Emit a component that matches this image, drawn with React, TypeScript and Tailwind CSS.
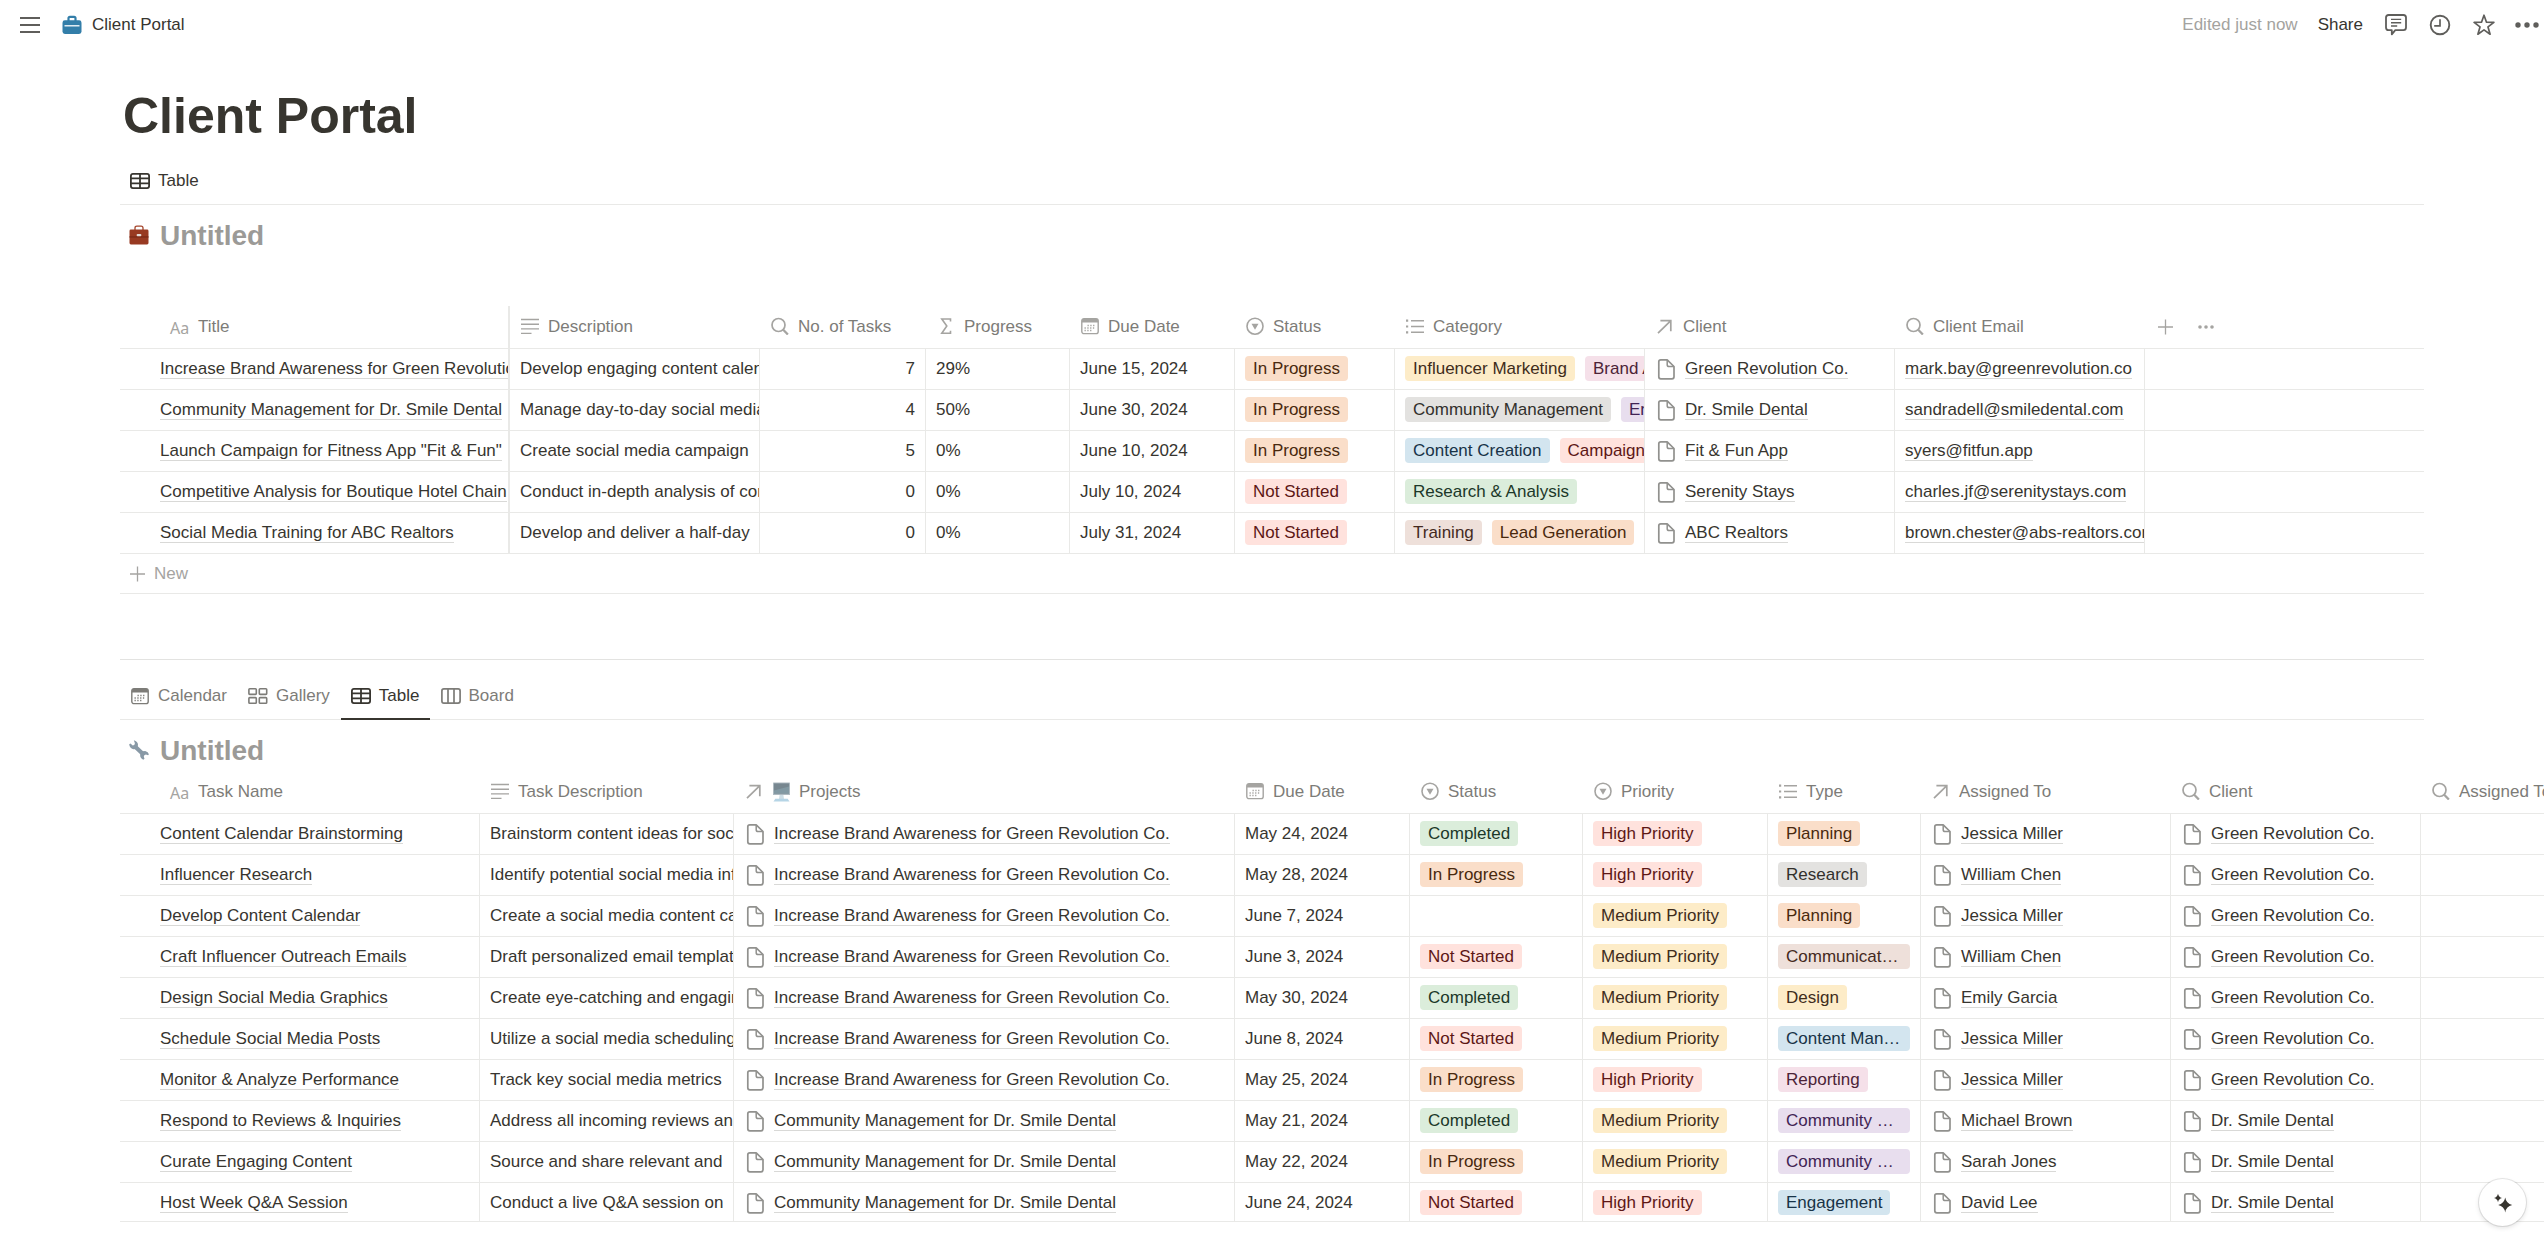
import type { ReactNode } from "react";
import clsx from "clsx";

type IconProps = { className?: string };

/* ---------- Icons ---------- */

function MenuIcon() {
  return (
    <svg width="20" height="20" viewBox="0 0 20 20" fill="none" stroke="#5f5e5b" strokeWidth="2">
      <path d="M0 3h20M0 10h20M0 17h20" />
    </svg>
  );
}

function ToolboxIcon() {
  return (
    <svg width="20" height="20" viewBox="0 0 20 20">
      <path d="M6.500 6V3.300Q6.500 1.900 7.900 1.900h4.200q1.400 0 1.400 1.400V6" fill="none" stroke="#337ea9" strokeWidth="2.200" />
      <rect x="0.500" y="5.300" width="19" height="13.700" rx="2.400" fill="#337ea9" />
      <path d="M2.500 10.800h15" stroke="#fff" strokeWidth="1.300" />
    </svg>
  );
}

function CommentIcon() {
  return (
    <svg width="22" height="22" viewBox="0 0 22 22" fill="none" stroke="#5f5e5b" strokeWidth="1.800" strokeLinejoin="round">
      <path d="M3.600 1h14.800Q21 1 21 3.600v10Q21 16.200 18.400 16.200H10.300L6.800 20.300V16.200H3.600Q1 16.200 1 13.600v-10Q1 1 3.600 1Z" />
      <path d="M6 5.400h10.200M6 8.700h10.200M6 12h6.200" strokeWidth="1.400" />
    </svg>
  );
}

function ClockIcon() {
  return (
    <svg width="22" height="22" viewBox="0 0 22 22" fill="none" stroke="#5f5e5b" strokeWidth="1.900">
      <circle cx="11" cy="11" r="9.300" />
      <path d="M11 5.200v6.700H5.200" strokeWidth="1.700" />
    </svg>
  );
}

function StarIcon() {
  return (
    <svg width="22" height="22" viewBox="0 0 22 22" fill="none" stroke="#5f5e5b" strokeWidth="1.700" strokeLinejoin="round">
      <path d="M11 1.200l2.500 7 7.400.2-5.900 4.500 2.100 7.300-6.100-4.300-6.100 4.300L7 12.900 1.100 8.400l7.400-.2Z" />
    </svg>
  );
}

function DotsIcon({ className }: IconProps) {
  return (
    <svg className={className} viewBox="0 0 24 6" fill="currentColor">
      <circle cx="3" cy="3" r="2.700" />
      <circle cx="12" cy="3" r="2.700" />
      <circle cx="21" cy="3" r="2.700" />
    </svg>
  );
}

function PlusIcon() {
  return (
    <svg width="16" height="16" viewBox="0 0 16 16" stroke="currentColor" strokeWidth="1.300">
      <path d="M7.500 .5v15M0 8h15" />
    </svg>
  );
}

function TableIcon() {
  return (
    <svg width="20" height="20" viewBox="0 0 20 20" fill="none" stroke="currentColor" strokeWidth="1.800">
      <rect x="0.900" y="2.900" width="18.200" height="14.200" rx="2" />
      <path d="M1 7.400h18M1 12.400h18M10 3v14" />
    </svg>
  );
}

function BoardIcon() {
  return (
    <svg width="20" height="20" viewBox="0 0 20 20" fill="none" stroke="currentColor" strokeWidth="1.700">
      <rect x="0.900" y="2.900" width="18.200" height="14.200" rx="2" />
      <path d="M7 3v14M13 3v14" />
    </svg>
  );
}

function GalleryIcon() {
  return (
    <svg width="20" height="20" viewBox="0 0 20 20" fill="none" stroke="currentColor" strokeWidth="1.600">
      <rect x="0.900" y="2.800" width="7.400" height="5.600" rx="0.800" />
      <rect x="11.300" y="2.800" width="7.400" height="5.600" rx="0.800" />
      <rect x="0.900" y="11.600" width="7.400" height="5.600" rx="0.800" />
      <rect x="11.300" y="11.600" width="7.400" height="5.600" rx="0.800" />
    </svg>
  );
}

function CalendarIcon() {
  return (
    <svg width="18" height="18" viewBox="0 0 18 18" fill="none" stroke="currentColor">
      <rect x="0.800" y="1.600" width="16.400" height="15" rx="2.200" strokeWidth="1.400" />
      <path d="M1 3.600q0-1.800 1.800-1.800h12.400q1.800 0 1.800 1.800v2H1Z" fill="currentColor" stroke="none" />
      <path d="M6.500 8.500h8M3.500 11h11M3.500 13.500h8" strokeWidth="1.300" strokeDasharray="1.300 1.500" />
    </svg>
  );
}

function LinesIcon() {
  return (
    <svg width="18" height="18" viewBox="0 0 18 18" stroke="currentColor" strokeWidth="1.400">
      <path d="M0 2.500h18M0 7.200h18M0 11.900h18M0 16.400h10.500" />
    </svg>
  );
}

function SearchIcon() {
  return (
    <svg width="18" height="18" viewBox="0 0 18 18" fill="none" stroke="currentColor">
      <circle cx="7.500" cy="8" r="6.500" strokeWidth="1.700" />
      <path d="M12.200 12.800l4.700 4.700" strokeWidth="2.300" />
    </svg>
  );
}

function SigmaIcon() {
  return (
    <svg width="18" height="18" viewBox="0 0 18 18" fill="none" stroke="currentColor" strokeWidth="1.600">
      <path d="M13.500 4.500V2H4.800l5 7-5 7.200h8.700v-2.500" />
    </svg>
  );
}

function SelectIcon() {
  return (
    <svg width="18" height="18" viewBox="0 0 18 18" fill="none" stroke="currentColor" strokeWidth="1.600">
      <circle cx="9" cy="9.200" r="8" />
      <path d="M5.500 6.800h7L9 12.700Z" fill="currentColor" stroke="none" />
    </svg>
  );
}

function ListIcon() {
  return (
    <svg width="18" height="18" viewBox="0 0 18 18" fill="none" stroke="currentColor" strokeWidth="1.500">
      <path d="M5 3.700h13M5 9.500h13M5 15.300h13" />
      <path d="M0 3.700h2.200M0 9.500h2.200M0 15.300h2.200" strokeWidth="2.200" />
    </svg>
  );
}

function ArrowIcon() {
  return (
    <svg width="18" height="18" viewBox="0 0 18 18" fill="none" stroke="currentColor" strokeWidth="1.700">
      <path d="M2 16.200L14.600 3.800M4.400 3.700h10.400v10.600" />
    </svg>
  );
}

function PageIcon() {
  return (
    <svg className="shrink-0 text-[#91918e]" width="22" height="23" viewBox="0 0 22 23" fill="none" stroke="currentColor" strokeWidth="1.700" strokeLinejoin="round">
      <path d="M5.800 2.800h6.400l6.800 6.700v10.300q0 2-2 2H5.800q-2 0-2-2v-15q0-2 2-2Z" />
      <path d="M12.200 3v4.700q0 1.900 1.900 1.900H19" strokeWidth="1.500" />
    </svg>
  );
}

function BriefcaseEmoji() {
  return (
    <svg width="20" height="20" viewBox="0 0 20 20">
      <path d="M6 5V3q0-1.900 1.900-1.900h4.200Q14 1.100 14 3v2" fill="none" stroke="#a5452c" strokeWidth="1.300" />
      <rect x="0.500" y="4.600" width="19" height="14.900" rx="1.400" fill="#983a22" />
      <path d="M.5 11.300h19v1.300H.5Z" fill="#7a2a18" />
      <rect x="7.700" y="9" width="4.600" height="2.300" rx="0.800" fill="#e3dcd9" />
    </svg>
  );
}

function WrenchEmoji() {
  return (
    <svg width="20" height="20" viewBox="0 0 20 20">
      <path d="M5.500 6l9 8.500" stroke="#8899a6" strokeWidth="4.200" />
      <path
        d="M4.800.3Q8.900 1.300 9 4.800L8.600 7.200 6.900 9.100 4.300 9.300Q.6 8.300.2 4.300L1.500 3.600 3.700 5.500 5.300 4.900 5.900 3.300Z"
        fill="#8899a6"
      />
      <path
        d="M14.300 19.700Q10.700 18.200 11.200 14.600L12.200 12.500 14 11.200 16.200 11.100Q19.300 11.800 19.900 14.200L19.100 15.300 16.900 14.400 15.300 15.200 14.800 16.800 15.500 18.800Z"
        fill="#8899a6"
      />
    </svg>
  );
}

function MonitorEmoji() {
  return (
    <svg className="shrink-0 opacity-80" width="19" height="20" viewBox="0 0 19 20">
      <rect x="1" y="0.500" width="17" height="12.500" rx="0.600" fill="#9aa9b2" />
      <path d="M2 1.400h15v10.200H2Z" fill="#566a75" />
      <path d="M2 8.500l15-4v7.100H2Z" fill="#64808d" />
      <path d="M7.600 13h3.800l.6 4H7Z" fill="#c3d6e0" />
      <path d="M3.300 16.800h12.400l1.800 2.700h-16Z" fill="#a5cbe0" />
    </svg>
  );
}

function SparkleIcon() {
  return (
    <svg width="20" height="20" viewBox="0 0 20 20" fill="#37352f">
      <path d="M12.200 4.600q1 6.200 7 7.400-6 1.200-7 7.400-1-6.200-7-7.400 6-1.200 7-7.400Z" />
      <path d="M5 .8q.7 3.600 4 4.200-3.300.7-4 4.200-.7-3.500-4-4.200Q4.300 4.400 5 .8Z" />
    </svg>
  );
}

function AaIcon() {
  return <span className="w-5 pt-1 font-['Noto_Sans'] text-base leading-5">Aa</span>;
}

/* ---------- Building blocks ---------- */

const tagColors = {
  orange: "bg-[#fadec9] text-[#49290e]",
  red: "bg-[#ffe2dd] text-[#5d1715]",
  yellow: "bg-[#fdecc8] text-[#402c1b]",
  pink: "bg-[#f5e0e9] text-[#4c2337]",
  gray: "bg-[#e3e2e0] text-[#32302c]",
  purple: "bg-[#e8deee] text-[#412454]",
  blue: "bg-[#d3e5ef] text-[#183347]",
  green: "bg-[#dbeddb] text-[#1c3829]",
  brown: "bg-[#eee0da] text-[#442a1e]",
};

type TagColor = keyof typeof tagColors;
type TagData = [string, TagColor];

function Tag({ tag, shrink }: { tag: TagData; shrink?: boolean }) {
  return (
    <span
      className={clsx(
        "block h-[25px] rounded-[4px] px-2 leading-[25px]",
        shrink ? "min-w-0 truncate" : "shrink-0",
        tagColors[tag[1]],
      )}
    >
      {tag[0]}
    </span>
  );
}

function CellLink({ children }: { children: ReactNode }) {
  return (
    <a href="#" className="block shrink-0 border-b border-[#d9d9d7] pt-px leading-[19px]">
      {children}
    </a>
  );
}

function PageLink({ children }: { children: ReactNode }) {
  return (
    <div className="flex items-center gap-2">
      <PageIcon />
      <CellLink>{children}</CellLink>
    </div>
  );
}

function HeaderCell({ icon, label, first, pinned }: { icon: ReactNode; label: ReactNode; first?: boolean; pinned?: boolean }) {
  return (
    <th className={clsx("border-b border-[#e9e9e7] p-0 font-normal", pinned && "border-r-2")}>
      <div
        className={clsx(
          "flex h-[42px] items-center overflow-hidden pb-0.5 whitespace-nowrap",
          first ? "gap-2 pl-[50px]" : "gap-[9px] pl-[11px]",
        )}
      >
        <span className="flex shrink-0 text-[#a5a4a1]">{icon}</span>
        <span className="flex items-center gap-2 pt-0.5 text-[#7d7c78]">{label}</span>
      </div>
    </th>
  );
}

type CellProps = { children?: ReactNode; first?: boolean; pinned?: boolean; right?: boolean; last?: boolean; short?: boolean };

function Cell({ children, first, pinned, right, last, short }: CellProps) {
  return (
    <td className={clsx("border-b border-[#e9e9e7] p-0", pinned ? "border-r-2" : !last && "border-r")}>
      <div
        className={clsx(
          "flex items-center overflow-hidden leading-[21px] whitespace-nowrap",
          short ? "h-[38px] pt-px" : "h-10 pb-px",
          first ? "pl-10" : "px-2.5",
          right && "justify-end",
        )}
      >
        {children}
      </div>
    </td>
  );
}

function Tab({ icon, label, active, underline }: { icon: ReactNode; label: string; active?: boolean; underline?: boolean }) {
  return (
    <button
      type="button"
      className={clsx(
        "-mb-px flex h-12 items-center gap-2 border-b-2 px-2.5 pt-0.5",
        active ? "text-[#37352f]" : "text-[#7d7c78]",
        underline ? "border-[#37352f]" : "border-transparent",
      )}
    >
      <span className="flex w-5 justify-center">{icon}</span>
      {label}
    </button>
  );
}

function DatabaseTitle({ icon }: { icon: ReactNode }) {
  return (
    <div className="mt-[13px] flex items-center gap-[11px] pl-[9px]">
      {icon}
      <h2 className="pt-0.5 text-[28px] leading-8 font-bold text-[#9b9a97]">Untitled</h2>
    </div>
  );
}

/* ---------- Data ---------- */

const inProgress: TagData = ["In Progress", "orange"];
const notStarted: TagData = ["Not Started", "red"];
const completed: TagData = ["Completed", "green"];
const high: TagData = ["High Priority", "red"];
const medium: TagData = ["Medium Priority", "yellow"];

const projects: {
  title: string;
  description: string;
  tasks: number;
  progress: string;
  due: string;
  status: TagData;
  category: TagData[];
  client: string;
  email: string;
}[] = [
  {
    title: "Increase Brand Awareness for Green Revolution Co.",
    description: "Develop engaging content calendar",
    tasks: 7,
    progress: "29%",
    due: "June 15, 2024",
    status: inProgress,
    category: [["Influencer Marketing", "yellow"], ["Brand Awareness", "pink"]],
    client: "Green Revolution Co.",
    email: "mark.bay@greenrevolution.co",
  },
  {
    title: "Community Management for Dr. Smile Dental",
    description: "Manage day-to-day social media",
    tasks: 4,
    progress: "50%",
    due: "June 30, 2024",
    status: inProgress,
    category: [["Community Management", "gray"], ["Engagement", "purple"]],
    client: "Dr. Smile Dental",
    email: "sandradell@smiledental.com",
  },
  {
    title: 'Launch Campaign for Fitness App "Fit & Fun"',
    description: "Create social media campaign",
    tasks: 5,
    progress: "0%",
    due: "June 10, 2024",
    status: inProgress,
    category: [["Content Creation", "blue"], ["Campaign", "red"]],
    client: "Fit & Fun App",
    email: "syers@fitfun.app",
  },
  {
    title: "Competitive Analysis for Boutique Hotel Chain",
    description: "Conduct in-depth analysis of competitors",
    tasks: 0,
    progress: "0%",
    due: "July 10, 2024",
    status: notStarted,
    category: [["Research & Analysis", "green"]],
    client: "Serenity Stays",
    email: "charles.jf@serenitystays.com",
  },
  {
    title: "Social Media Training for ABC Realtors",
    description: "Develop and deliver a half-day",
    tasks: 0,
    progress: "0%",
    due: "July 31, 2024",
    status: notStarted,
    category: [["Training", "brown"], ["Lead Generation", "orange"]],
    client: "ABC Realtors",
    email: "brown.chester@abs-realtors.com",
  },
];

const green = ["Increase Brand Awareness for Green Revolution Co.", "Green Revolution Co."];
const smile = ["Community Management for Dr. Smile Dental", "Dr. Smile Dental"];

const tasks: {
  name: string;
  description: string;
  project: string[];
  due: string;
  status: TagData | null;
  priority: TagData;
  type: TagData;
  assignee: string;
}[] = [
  { name: "Content Calendar Brainstorming", description: "Brainstorm content ideas for social media", project: green, due: "May 24, 2024", status: completed, priority: high, type: ["Planning", "orange"], assignee: "Jessica Miller" },
  { name: "Influencer Research", description: "Identify potential social media influencers", project: green, due: "May 28, 2024", status: inProgress, priority: high, type: ["Research", "gray"], assignee: "William Chen" },
  { name: "Develop Content Calendar", description: "Create a social media content calendar", project: green, due: "June 7, 2024", status: null, priority: medium, type: ["Planning", "orange"], assignee: "Jessica Miller" },
  { name: "Craft Influencer Outreach Emails", description: "Draft personalized email templates", project: green, due: "June 3, 2024", status: notStarted, priority: medium, type: ["Communication", "brown"], assignee: "William Chen" },
  { name: "Design Social Media Graphics", description: "Create eye-catching and engaging", project: green, due: "May 30, 2024", status: completed, priority: medium, type: ["Design", "yellow"], assignee: "Emily Garcia" },
  { name: "Schedule Social Media Posts", description: "Utilize a social media scheduling", project: green, due: "June 8, 2024", status: notStarted, priority: medium, type: ["Content Management", "blue"], assignee: "Jessica Miller" },
  { name: "Monitor & Analyze Performance", description: "Track key social media metrics", project: green, due: "May 25, 2024", status: inProgress, priority: high, type: ["Reporting", "pink"], assignee: "Jessica Miller" },
  { name: "Respond to Reviews & Inquiries", description: "Address all incoming reviews and", project: smile, due: "May 21, 2024", status: completed, priority: medium, type: ["Community Management", "purple"], assignee: "Michael Brown" },
  { name: "Curate Engaging Content", description: "Source and share relevant and", project: smile, due: "May 22, 2024", status: inProgress, priority: medium, type: ["Community Management", "purple"], assignee: "Sarah Jones" },
  { name: "Host Week Q&A Session", description: "Conduct a live Q&A session on", project: smile, due: "June 24, 2024", status: notStarted, priority: high, type: ["Engagement", "blue"], assignee: "David Lee" },
];

/* ---------- Sections ---------- */

function TopBar() {
  return (
    <header className="flex h-[50px] items-center justify-between pr-[5px] pl-5">
      <div className="flex items-center">
        <button type="button" aria-label="Menu">
          <MenuIcon />
        </button>
        <a href="#" className="ml-[22px] flex items-center gap-2.5 leading-5">
          <ToolboxIcon />
          Client Portal
        </a>
      </div>
      <div className="flex items-center leading-5">
        <span className="text-[#a4a3a0]">Edited just now</span>
        <button type="button" className="ml-5">Share</button>
        <div className="ml-[22px] flex items-center gap-[22px]">
          <button type="button" aria-label="Comments"><CommentIcon /></button>
          <button type="button" aria-label="Updates"><ClockIcon /></button>
          <button type="button" aria-label="Favorite"><StarIcon /></button>
          <button type="button" aria-label="More" className="-ml-0.5 text-[#5f5e5b]"><DotsIcon className="h-1.5 w-6" /></button>
        </div>
      </div>
    </header>
  );
}

function ProjectsTable() {
  return (
    <table className="mt-[54px] w-full table-fixed border-separate border-spacing-0 text-left">
      <colgroup>
        <col className="w-[390px]" />
        <col className="w-[250px]" />
        <col className="w-[166px]" />
        <col className="w-[144px]" />
        <col className="w-[165px]" />
        <col className="w-[160px]" />
        <col className="w-[250px]" />
        <col className="w-[250px]" />
        <col className="w-[250px]" />
        <col />
      </colgroup>
      <thead>
        <tr>
          <HeaderCell first pinned icon={<AaIcon />} label="Title" />
          <HeaderCell icon={<LinesIcon />} label="Description" />
          <HeaderCell icon={<SearchIcon />} label="No. of Tasks" />
          <HeaderCell icon={<SigmaIcon />} label="Progress" />
          <HeaderCell icon={<CalendarIcon />} label="Due Date" />
          <HeaderCell icon={<SelectIcon />} label="Status" />
          <HeaderCell icon={<ListIcon />} label="Category" />
          <HeaderCell icon={<ArrowIcon />} label="Client" />
          <HeaderCell icon={<SearchIcon />} label="Client Email" />
          <th className="border-b border-[#e9e9e7] p-0">
            <div className="flex items-center gap-6 pl-[13px] text-[#a5a4a1]">
              <button type="button" aria-label="Add property"><PlusIcon /></button>
              <button type="button" aria-label="More properties"><DotsIcon className="h-1 w-4" /></button>
            </div>
          </th>
        </tr>
      </thead>
      <tbody>
        {projects.map((p) => (
          <tr key={p.title}>
            <Cell first pinned><CellLink>{p.title}</CellLink></Cell>
            <Cell>{p.description}</Cell>
            <Cell right>{p.tasks}</Cell>
            <Cell>{p.progress}</Cell>
            <Cell>{p.due}</Cell>
            <Cell><Tag tag={p.status} /></Cell>
            <Cell>
              <div className="flex gap-2.5">
                {p.category.map((tag) => <Tag key={tag[0]} tag={tag} />)}
              </div>
            </Cell>
            <Cell><PageLink>{p.client}</PageLink></Cell>
            <Cell><CellLink>{p.email}</CellLink></Cell>
            <Cell last />
          </tr>
        ))}
      </tbody>
    </table>
  );
}

function TasksTable() {
  return (
    <table className="mt-1 w-[2551px] table-fixed border-separate border-spacing-0 text-left">
      <colgroup>
        <col className="w-[360px]" />
        <col className="w-[254px]" />
        <col className="w-[501px]" />
        <col className="w-[175px]" />
        <col className="w-[173px]" />
        <col className="w-[185px]" />
        <col className="w-[153px]" />
        <col className="w-[250px]" />
        <col className="w-[250px]" />
        <col className="w-[250px]" />
      </colgroup>
      <thead>
        <tr>
          <HeaderCell first icon={<AaIcon />} label="Task Name" />
          <HeaderCell icon={<LinesIcon />} label="Task Description" />
          <HeaderCell icon={<ArrowIcon />} label={<><MonitorEmoji />Projects</>} />
          <HeaderCell icon={<CalendarIcon />} label="Due Date" />
          <HeaderCell icon={<SelectIcon />} label="Status" />
          <HeaderCell icon={<SelectIcon />} label="Priority" />
          <HeaderCell icon={<ListIcon />} label="Type" />
          <HeaderCell icon={<ArrowIcon />} label="Assigned To" />
          <HeaderCell icon={<SearchIcon />} label="Client" />
          <HeaderCell icon={<SearchIcon />} label="Assigned To" />
        </tr>
      </thead>
      <tbody>
        {tasks.map((t, i) => {
          const short = i === tasks.length - 1;
          return (
            <tr key={t.name}>
              <Cell short={short} first><CellLink>{t.name}</CellLink></Cell>
              <Cell short={short}>{t.description}</Cell>
              <Cell short={short}><PageLink>{t.project[0]}</PageLink></Cell>
              <Cell short={short}>{t.due}</Cell>
              <Cell short={short}>{t.status && <Tag tag={t.status} />}</Cell>
              <Cell short={short}><Tag tag={t.priority} /></Cell>
              <Cell short={short}><Tag tag={t.type} shrink /></Cell>
              <Cell short={short}><PageLink>{t.assignee}</PageLink></Cell>
              <Cell short={short}><PageLink>{t.project[1]}</PageLink></Cell>
              <Cell short={short} last />
            </tr>
          );
        })}
      </tbody>
    </table>
  );
}

export default function App() {
  return (
    <div className="min-h-screen overflow-hidden bg-white font-['Liberation_Sans',Arial,sans-serif] text-[17px] text-[#37352f]">
      <TopBar />
      <main className="px-[120px] pt-9">
        <h1 className="px-[3px] text-[50px] leading-[60px] font-bold">Client Portal</h1>

        {/* Projects */}
        <section>
          <div className="mt-[11px] flex border-b border-[#e9e9e7]">
            <Tab icon={<TableIcon />} label="Table" active />
          </div>
          <DatabaseTitle icon={<BriefcaseEmoji />} />
          <ProjectsTable />
          <button
            type="button"
            className="flex h-10 w-full items-center gap-2 border-b border-[#e9e9e7] pl-2.5 text-[#a5a4a1]"
          >
            <PlusIcon />
            New
          </button>
        </section>

        <hr className="mt-[65px] border-[#e3e3e1]" />

        {/* Tasks */}
        <section>
          <div className="mt-3 flex gap-px border-b border-[#e9e9e7]">
            <Tab icon={<CalendarIcon />} label="Calendar" />
            <Tab icon={<GalleryIcon />} label="Gallery" />
            <Tab icon={<TableIcon />} label="Table" active underline />
            <Tab icon={<BoardIcon />} label="Board" />
          </div>
          <DatabaseTitle icon={<WrenchEmoji />} />
          <TasksTable />
        </section>
      </main>

      <button
        type="button"
        aria-label="Ask AI"
        className="fixed right-[18px] bottom-[33px] flex size-[47px] items-center justify-center rounded-full bg-white shadow-[0_0_0_1px_rgba(15,15,15,0.1),0_2px_5px_rgba(15,15,15,0.12)]"
      >
        <SparkleIcon />
      </button>
    </div>
  );
}
